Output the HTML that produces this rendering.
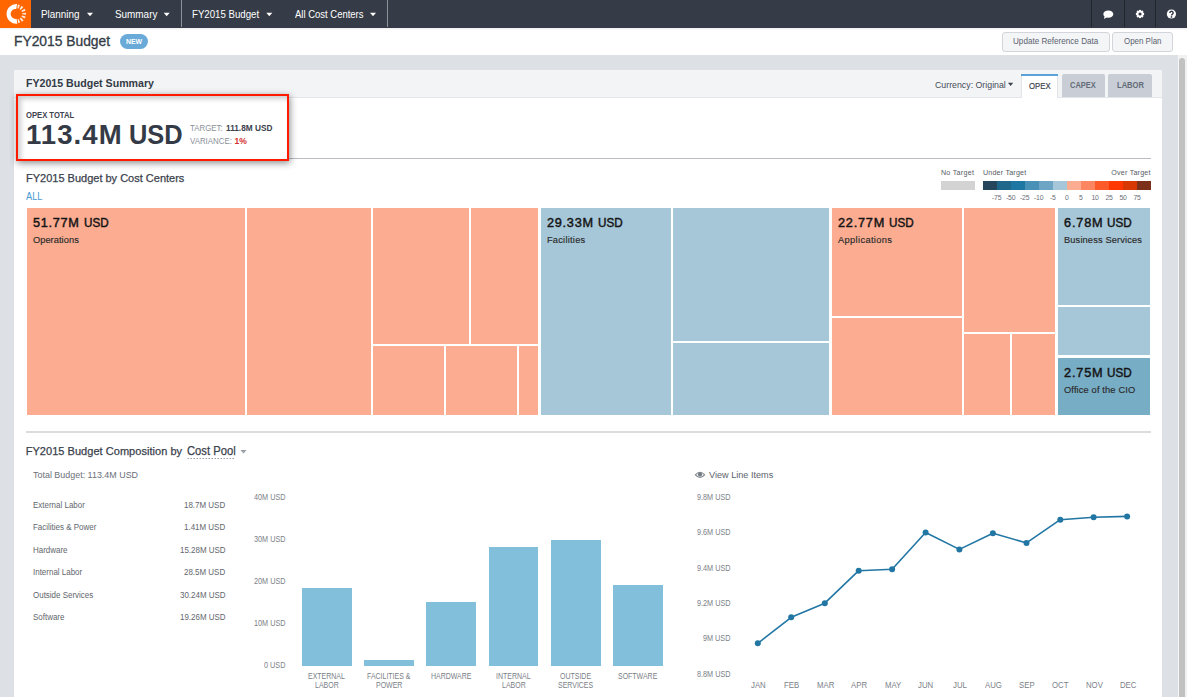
<!DOCTYPE html>
<html><head><meta charset="utf-8"><title>FY2015 Budget</title>
<style>
html,body{margin:0;padding:0;}
body{width:1187px;height:697px;overflow:hidden;position:relative;background:#dde0e4;font-family:"Liberation Sans",sans-serif;}
.r{position:absolute;}
.t{position:absolute;white-space:nowrap;font-family:"Liberation Sans",sans-serif;}
svg{position:absolute;left:0;top:0;}
</style></head><body>
<div class="r" style="left:0px;top:0px;width:1187px;height:28px;background:#363c47;"></div>
<div class="r" style="left:0px;top:0px;width:31px;height:28px;background:#ff6600;"></div>
<div class="r" style="left:181px;top:0px;width:1px;height:28px;background:#8d9299;"></div>
<div class="r" style="left:387px;top:0px;width:1px;height:28px;background:#8d9299;"></div>
<div class="r" style="left:1091px;top:0px;width:1px;height:28px;background:#1f232a;"></div>
<div class="r" style="left:1124px;top:0px;width:1px;height:28px;background:#1f232a;"></div>
<div class="r" style="left:1155px;top:0px;width:1px;height:28px;background:#1f232a;"></div>
<div class="r" style="left:0px;top:28px;width:1187px;height:27px;background:#ffffff;"></div>
<div class="r" style="left:31px;top:27px;width:1156px;height:1px;background:#363c47;box-shadow:0 1px 2px rgba(0,0,0,0.12);"></div>
<div class="r" style="left:0px;top:27px;width:31px;height:1px;background:#ff6600;box-shadow:0 1px 2px rgba(0,0,0,0.12);"></div>
<div class="r" style="left:120px;top:34px;width:28px;height:15px;background:#6aaad8;border-radius:7.5px;"></div>
<div class="r" style="left:1002px;top:32px;width:108px;height:20px;background:#f4f5f7;border:1px solid #d2d6db;box-sizing:border-box;border-radius:3px;"></div>
<div class="r" style="left:1112px;top:32px;width:61px;height:20px;background:#f4f5f7;border:1px solid #d2d6db;box-sizing:border-box;border-radius:3px;"></div>
<div class="r" style="left:1178px;top:55px;width:9px;height:642px;background:#f1f1f1;"></div>
<div class="r" style="left:1178px;top:55px;width:1px;height:642px;background:#f7f7f7;"></div>
<div class="r" style="left:1179px;top:58px;width:6px;height:652px;background:#c1c1c1;border-radius:3px;"></div>
<div class="r" style="left:14px;top:70px;width:1148px;height:627px;background:#ffffff;"></div>
<div class="r" style="left:14px;top:70px;width:1148px;height:27px;background:#f3f4f6;"></div>
<div class="r" style="left:14px;top:97px;width:1148px;height:1px;background:#e3e5e8;"></div>
<div class="r" style="left:1021px;top:74px;width:37px;height:24px;background:#ffffff;border-left:1px solid #e1e4e8;border-right:1px solid #e1e4e8;box-sizing:border-box;"></div>
<div class="r" style="left:1021px;top:74px;width:37px;height:2px;background:#5aa2d8;"></div>
<div class="r" style="left:1062px;top:74px;width:43px;height:23px;background:#c9ced6;border-radius:2px 2px 0 0;"></div>
<div class="r" style="left:1108px;top:74px;width:44px;height:23px;background:#c9ced6;border-radius:2px 2px 0 0;"></div>
<div class="r" style="left:26px;top:158px;width:1125px;height:1px;background:#b9bdc3;"></div>
<div class="r" style="left:16px;top:94px;width:273px;height:67px;background:#ffffff;border:2px solid #ff1a00;box-sizing:border-box;box-shadow:1px 2px 7px rgba(0,0,0,0.45), inset 3px 3px 5px rgba(0,0,0,0.2);"></div>
<div class="r" style="left:941px;top:181px;width:34px;height:9px;background:#d3d3d3;"></div>
<div class="r" style="left:983px;top:181px;width:14px;height:9px;background:#25465c;"></div>
<div class="r" style="left:997px;top:181px;width:14px;height:9px;background:#1f688c;"></div>
<div class="r" style="left:1011px;top:181px;width:14px;height:9px;background:#1e76a3;"></div>
<div class="r" style="left:1025px;top:181px;width:14px;height:9px;background:#4a91b8;"></div>
<div class="r" style="left:1039px;top:181px;width:14px;height:9px;background:#6ea5c4;"></div>
<div class="r" style="left:1053px;top:181px;width:14px;height:9px;background:#a5c7d9;"></div>
<div class="r" style="left:1067px;top:181px;width:14px;height:9px;background:#fcac91;"></div>
<div class="r" style="left:1081px;top:181px;width:14px;height:9px;background:#fc8662;"></div>
<div class="r" style="left:1095px;top:181px;width:14px;height:9px;background:#fc5a28;"></div>
<div class="r" style="left:1109px;top:181px;width:14px;height:9px;background:#ff3700;"></div>
<div class="r" style="left:1123px;top:181px;width:14px;height:9px;background:#d83904;"></div>
<div class="r" style="left:1137px;top:181px;width:14px;height:9px;background:#7d3019;"></div>
<div class="r" style="left:27px;top:208px;width:218px;height:207px;background:#fbac91;"></div>
<div class="r" style="left:247px;top:208px;width:124px;height:207px;background:#fbac91;"></div>
<div class="r" style="left:373px;top:208px;width:96px;height:136px;background:#fbac91;"></div>
<div class="r" style="left:471px;top:208px;width:67px;height:136px;background:#fbac91;"></div>
<div class="r" style="left:373px;top:346px;width:71px;height:69px;background:#fbac91;"></div>
<div class="r" style="left:446px;top:346px;width:71px;height:69px;background:#fbac91;"></div>
<div class="r" style="left:519px;top:346px;width:19px;height:69px;background:#fbac91;"></div>
<div class="r" style="left:541px;top:208px;width:130px;height:207px;background:#a6c7d8;"></div>
<div class="r" style="left:673px;top:208px;width:156px;height:133px;background:#a6c7d8;"></div>
<div class="r" style="left:673px;top:343px;width:156px;height:72px;background:#a6c7d8;"></div>
<div class="r" style="left:832px;top:208px;width:130px;height:108px;background:#fbac91;"></div>
<div class="r" style="left:832px;top:318px;width:130px;height:97px;background:#fbac91;"></div>
<div class="r" style="left:964px;top:208px;width:91px;height:124px;background:#fbac91;"></div>
<div class="r" style="left:964px;top:334px;width:46px;height:81px;background:#fbac91;"></div>
<div class="r" style="left:1012px;top:334px;width:43px;height:81px;background:#fbac91;"></div>
<div class="r" style="left:1058px;top:208px;width:92px;height:97px;background:#a6c7d8;"></div>
<div class="r" style="left:1058px;top:307px;width:92px;height:48px;background:#a6c7d8;"></div>
<div class="r" style="left:1058px;top:358px;width:92px;height:57px;background:#78adc6;"></div>
<div class="r" style="left:26px;top:431px;width:1125px;height:2px;background:#dcdcdc;"></div>
<div class="r" style="left:302.1px;top:587.83px;width:49.69999999999999px;height:78.16999999999996px;background:#82bfda;"></div>
<div class="r" style="left:364.28px;top:660.11px;width:49.700000000000045px;height:5.889999999999986px;background:#82bfda;"></div>
<div class="r" style="left:426.46px;top:602.13px;width:49.700000000000045px;height:63.870000000000005px;background:#82bfda;"></div>
<div class="r" style="left:488.64px;top:546.87px;width:49.700000000000045px;height:119.13px;background:#82bfda;"></div>
<div class="r" style="left:550.82px;top:539.6px;width:49.69999999999993px;height:126.39999999999998px;background:#82bfda;"></div>
<div class="r" style="left:613.0px;top:585.49px;width:49.700000000000045px;height:80.50999999999999px;background:#82bfda;"></div>
<svg width="1187" height="697" viewBox="0 0 1187 697"><line x1="187.5" y1="458.5" x2="235.5" y2="458.5" stroke="#9aa0a8" stroke-width="1" stroke-dasharray="1.5 1.5"/>
<polygon points="87,12.7 93,12.7 90.0,16.2" fill="#fff"/>
<polygon points="163.7,12.7 169.7,12.7 166.7,16.2" fill="#fff"/>
<polygon points="266.3,12.7 272.3,12.7 269.3,16.2" fill="#fff"/>
<polygon points="370,12.7 376,12.7 373.0,16.2" fill="#fff"/>
<polygon points="1008,82.8 1013.2,82.8 1010.6,86" fill="#3a414c"/>
<polygon points="240.4,450 246.6,450 243.5,453.6" fill="#9aa0a8"/>
<polyline fill="none" stroke="#2176a4" stroke-width="1.6" stroke-linejoin="round" points="757.8,643.3 791.2,617.3 824.8,603.2 858.7,570.7 892.1,569.2 925.6,532.5 959.4,549.4 992.9,533.3 1026.5,542.9 1060.3,519.7 1093.6,517.3 1127.1,516.4"/>
<circle cx="757.8" cy="643.3" r="3" fill="#2176a4"/>
<circle cx="791.2" cy="617.3" r="3" fill="#2176a4"/>
<circle cx="824.8" cy="603.2" r="3" fill="#2176a4"/>
<circle cx="858.7" cy="570.7" r="3" fill="#2176a4"/>
<circle cx="892.1" cy="569.2" r="3" fill="#2176a4"/>
<circle cx="925.6" cy="532.5" r="3" fill="#2176a4"/>
<circle cx="959.4" cy="549.4" r="3" fill="#2176a4"/>
<circle cx="992.9" cy="533.3" r="3" fill="#2176a4"/>
<circle cx="1026.5" cy="542.9" r="3" fill="#2176a4"/>
<circle cx="1060.3" cy="519.7" r="3" fill="#2176a4"/>
<circle cx="1093.6" cy="517.3" r="3" fill="#2176a4"/>
<circle cx="1127.1" cy="516.4" r="3" fill="#2176a4"/>
<ellipse cx="1108.3" cy="14.1" rx="5.0" ry="3.6" fill="#fff"/><polygon points="1104.6,16.2 1106.9,17.2 1103.9,19.1" fill="#fff"/>
<rect x="1138.9" y="9.9" width="2.2" height="2.0" fill="#fff" transform="rotate(0 1140 14)"/><rect x="1138.9" y="9.9" width="2.2" height="2.0" fill="#fff" transform="rotate(45 1140 14)"/><rect x="1138.9" y="9.9" width="2.2" height="2.0" fill="#fff" transform="rotate(90 1140 14)"/><rect x="1138.9" y="9.9" width="2.2" height="2.0" fill="#fff" transform="rotate(135 1140 14)"/><rect x="1138.9" y="9.9" width="2.2" height="2.0" fill="#fff" transform="rotate(180 1140 14)"/><rect x="1138.9" y="9.9" width="2.2" height="2.0" fill="#fff" transform="rotate(225 1140 14)"/><rect x="1138.9" y="9.9" width="2.2" height="2.0" fill="#fff" transform="rotate(270 1140 14)"/><rect x="1138.9" y="9.9" width="2.2" height="2.0" fill="#fff" transform="rotate(315 1140 14)"/><circle cx="1140" cy="14" r="3.1" fill="#fff"/><circle cx="1140" cy="14" r="1.6" fill="#363c47"/>
<circle cx="1171.4" cy="14" r="4.6" fill="#fff"/><path d="M1169.9,12.9 A1.6,1.6 0 1 1 1172.5,14.1 C1171.8,14.5 1171.5,14.8 1171.5,15.6" fill="none" stroke="#363c47" stroke-width="1.5"/><circle cx="1171.5" cy="16.9" r="0.85" fill="#363c47"/>
<path d="M695.4,474.8 Q700,469.6 704.6,474.8 Q700,480 695.4,474.8 Z" fill="none" stroke="#7d838c" stroke-width="1.1"/><circle cx="700" cy="474.4" r="2.1" fill="#737a84"/>
<g><path d="M17,4.05 A9.9,9.9 0 1 0 17.3,23.8 L16.6,18.8 A5,5 0 1 1 16.3,8.95 Z" fill="#fff"/><path d="M17.6,6.4 A7.5,7.5 0 0 1 17.4,21.3" fill="none" stroke="#fff" stroke-width="3.8" stroke-dasharray="1.7 1.5" opacity="0.85"/></g></svg>
<div class="t" style="left:41.27px;top:8.6px;font-size:10.57px;line-height:10.57px;font-weight:400;color:#ffffff;letter-spacing:0px;transform:scaleX(0.935);transform-origin:0 0;">Planning</div>
<div class="t" style="left:114.8px;top:8.6px;font-size:10.57px;line-height:10.57px;font-weight:400;color:#ffffff;letter-spacing:0px;transform:scaleX(0.9378);transform-origin:0 0;">Summary</div>
<div class="t" style="left:191.78px;top:8.7px;font-size:10.57px;line-height:10.57px;font-weight:400;color:#ffffff;letter-spacing:0px;transform:scaleX(0.9151);transform-origin:0 0;">FY2015 Budget</div>
<div class="t" style="left:294.7px;top:8.7px;font-size:10.57px;line-height:10.57px;font-weight:400;color:#ffffff;letter-spacing:0px;transform:scaleX(0.8974);transform-origin:0 0;">All Cost Centers</div>
<div class="t" style="left:13.8px;top:35.2px;font-size:13.86px;line-height:13.86px;font-weight:400;color:#343b46;letter-spacing:0px;transform:scaleX(0.9969);transform-origin:0 0;-webkit-text-stroke:0.3px #343b46;">FY2015 Budget</div>
<div class="t" style="left:125.8px;top:37.9px;font-size:8.0px;line-height:8.0px;font-weight:700;color:#ffffff;letter-spacing:0px;transform:scaleX(0.8632);transform-origin:0 0;">NEW</div>
<div class="t" style="left:1012.9px;top:37.4px;font-size:9.29px;line-height:9.29px;font-weight:400;color:#5a626e;letter-spacing:0px;transform:scaleX(0.8745);transform-origin:0 0;">Update Reference Data</div>
<div class="t" style="left:1123.6px;top:37.4px;font-size:9.29px;line-height:9.29px;font-weight:400;color:#5a626e;letter-spacing:0px;transform:scaleX(0.8545);transform-origin:0 0;">Open Plan</div>
<div class="t" style="left:25.5px;top:78.2px;font-size:10.86px;line-height:10.86px;font-weight:700;color:#343b46;letter-spacing:0px;transform:scaleX(0.9771);transform-origin:0 0;">FY2015 Budget Summary</div>
<div class="t" style="left:934.6px;top:80.5px;font-size:9.29px;line-height:9.29px;font-weight:400;color:#454c57;letter-spacing:0px;transform:scaleX(0.9467);transform-origin:0 0;">Currency: Original</div>
<div class="t" style="left:1028.7px;top:81.9px;font-size:9.14px;line-height:9.14px;font-weight:400;color:#3c434e;letter-spacing:0px;transform:scaleX(0.852);transform-origin:0 0;-webkit-text-stroke:0.2px #3c434e;">OPEX</div>
<div class="t" style="left:1070.3px;top:81.1px;font-size:8.57px;line-height:8.57px;font-weight:700;color:#636b77;letter-spacing:0px;transform:scaleX(0.8733);transform-origin:0 0;">CAPEX</div>
<div class="t" style="left:1116.9px;top:81.1px;font-size:8.57px;line-height:8.57px;font-weight:700;color:#636b77;letter-spacing:0px;transform:scaleX(0.8867);transform-origin:0 0;">LABOR</div>
<div class="t" style="left:25.7px;top:111.2px;font-size:8.29px;line-height:8.29px;font-weight:700;color:#3e444e;letter-spacing:0px;transform:scaleX(0.9231);transform-origin:0 0;">OPEX TOTAL</div>
<div class="t" style="left:25.9px;top:121.4px;font-size:27.57px;line-height:27.57px;font-weight:700;color:#343b46;letter-spacing:1.08px;">113.4M</div>
<div class="t" style="left:129.38px;top:121.4px;font-size:27.57px;line-height:27.57px;font-weight:700;color:#343b46;letter-spacing:0px;transform:scaleX(0.9214);transform-origin:0 0;">USD</div>
<div class="t" style="left:190.4px;top:123.8px;font-size:8.57px;line-height:8.57px;font-weight:400;color:#8a9098;letter-spacing:0px;transform:scaleX(0.92);transform-origin:0 0;">TARGET:</div>
<div class="t" style="left:225.8px;top:123.8px;font-size:8.57px;line-height:8.57px;font-weight:700;color:#3a414c;letter-spacing:0px;transform:scaleX(0.9646);transform-origin:0 0;">111.8M USD</div>
<div class="t" style="left:190.4px;top:136.5px;font-size:8.57px;line-height:8.57px;font-weight:400;color:#8a9098;letter-spacing:0px;transform:scaleX(0.92);transform-origin:0 0;">VARIANCE:</div>
<div class="t" style="left:234.5px;top:136.5px;font-size:8.57px;line-height:8.57px;font-weight:700;color:#d43030;letter-spacing:0px;">1%</div>
<div class="t" style="left:25.8px;top:173.1px;font-size:11.14px;line-height:11.14px;font-weight:400;color:#3a414c;letter-spacing:0px;transform:scaleX(0.9887);transform-origin:0 0;-webkit-text-stroke:0.25px #3a414c;">FY2015 Budget by Cost Centers</div>
<div class="t" style="left:25.5px;top:192.2px;font-size:10.14px;line-height:10.14px;font-weight:400;color:#4a9ad4;letter-spacing:0px;transform:scaleX(0.9111);transform-origin:0 0;">ALL</div>
<div class="t" style="left:940.9px;top:169.8px;font-size:7.14px;line-height:7.14px;font-weight:400;color:#555b63;letter-spacing:0.287px;">No Target</div>
<div class="t" style="left:982.9px;top:169.8px;font-size:7.14px;line-height:7.14px;font-weight:400;color:#555b63;letter-spacing:0.209px;">Under Target</div>
<div class="t" style="left:1111.3px;top:169.8px;font-size:7.14px;line-height:7.14px;font-weight:400;color:#555b63;letter-spacing:0.21px;">Over Target</div>
<div class="t" style="left:992.0px;top:195.1px;font-size:6.86px;line-height:6.86px;font-weight:400;color:#6a7078;letter-spacing:-0.206px;">-75</div>
<div class="t" style="left:1006.0px;top:195.1px;font-size:6.86px;line-height:6.86px;font-weight:400;color:#6a7078;letter-spacing:-0.206px;">-50</div>
<div class="t" style="left:1020.0px;top:195.1px;font-size:6.86px;line-height:6.86px;font-weight:400;color:#6a7078;letter-spacing:-0.206px;">-25</div>
<div class="t" style="left:1034.0px;top:195.1px;font-size:6.86px;line-height:6.86px;font-weight:400;color:#6a7078;letter-spacing:-0.206px;">-10</div>
<div class="t" style="left:1050.0px;top:195.1px;font-size:6.86px;line-height:6.86px;font-weight:400;color:#6a7078;letter-spacing:-0.206px;">-5</div>
<div class="t" style="left:1065.0px;top:195.1px;font-size:6.86px;line-height:6.86px;font-weight:400;color:#6a7078;letter-spacing:-0.206px;">0</div>
<div class="t" style="left:1079.0px;top:195.1px;font-size:6.86px;line-height:6.86px;font-weight:400;color:#6a7078;letter-spacing:-0.206px;">5</div>
<div class="t" style="left:1091.5px;top:195.1px;font-size:6.86px;line-height:6.86px;font-weight:400;color:#6a7078;letter-spacing:-0.206px;">10</div>
<div class="t" style="left:1105.5px;top:195.1px;font-size:6.86px;line-height:6.86px;font-weight:400;color:#6a7078;letter-spacing:-0.206px;">25</div>
<div class="t" style="left:1119.5px;top:195.1px;font-size:6.86px;line-height:6.86px;font-weight:400;color:#6a7078;letter-spacing:-0.206px;">50</div>
<div class="t" style="left:1133.5px;top:195.1px;font-size:6.86px;line-height:6.86px;font-weight:400;color:#6a7078;letter-spacing:-0.206px;">75</div>
<div class="t" style="left:32.9px;top:217.2px;font-size:12.71px;line-height:12.71px;font-weight:400;color:#141414;letter-spacing:0.72px;-webkit-text-stroke:0.45px #141414;">51.77M</div>
<div class="t" style="left:83.7px;top:217.2px;font-size:12.71px;line-height:12.71px;font-weight:400;color:#141414;letter-spacing:0px;transform:scaleX(0.9185);transform-origin:0 0;-webkit-text-stroke:0.45px #141414;">USD</div>
<div class="t" style="left:32.9px;top:235.5px;font-size:9.29px;line-height:9.29px;font-weight:400;color:#2a2a2a;letter-spacing:0.056px;-webkit-text-stroke:0.15px #2a2a2a;">Operations</div>
<div class="t" style="left:546.9px;top:217.2px;font-size:12.71px;line-height:12.71px;font-weight:400;color:#141414;letter-spacing:0.76px;-webkit-text-stroke:0.45px #141414;">29.33M</div>
<div class="t" style="left:598.1px;top:217.2px;font-size:12.71px;line-height:12.71px;font-weight:400;color:#141414;letter-spacing:0px;transform:scaleX(0.9185);transform-origin:0 0;-webkit-text-stroke:0.45px #141414;">USD</div>
<div class="t" style="left:546.9px;top:235.5px;font-size:9.29px;line-height:9.29px;font-weight:400;color:#2a2a2a;letter-spacing:0.244px;-webkit-text-stroke:0.15px #2a2a2a;">Facilities</div>
<div class="t" style="left:838.0px;top:217.2px;font-size:12.71px;line-height:12.71px;font-weight:400;color:#141414;letter-spacing:0.78px;-webkit-text-stroke:0.45px #141414;">22.77M</div>
<div class="t" style="left:889.0px;top:217.2px;font-size:12.71px;line-height:12.71px;font-weight:400;color:#141414;letter-spacing:0px;transform:scaleX(0.9185);transform-origin:0 0;-webkit-text-stroke:0.45px #141414;">USD</div>
<div class="t" style="left:838.0px;top:235.5px;font-size:9.29px;line-height:9.29px;font-weight:400;color:#2a2a2a;letter-spacing:0.355px;-webkit-text-stroke:0.15px #2a2a2a;">Applications</div>
<div class="t" style="left:1064.0px;top:217.2px;font-size:12.71px;line-height:12.71px;font-weight:400;color:#141414;letter-spacing:0.825px;-webkit-text-stroke:0.45px #141414;">6.78M</div>
<div class="t" style="left:1107.4px;top:217.2px;font-size:12.71px;line-height:12.71px;font-weight:400;color:#141414;letter-spacing:0px;transform:scaleX(0.9185);transform-origin:0 0;-webkit-text-stroke:0.45px #141414;">USD</div>
<div class="t" style="left:1064.0px;top:235.5px;font-size:9.29px;line-height:9.29px;font-weight:400;color:#2a2a2a;letter-spacing:0.131px;-webkit-text-stroke:0.15px #2a2a2a;">Business Services</div>
<div class="t" style="left:1064.0px;top:367.2px;font-size:12.71px;line-height:12.71px;font-weight:400;color:#141414;letter-spacing:0.825px;-webkit-text-stroke:0.45px #141414;">2.75M</div>
<div class="t" style="left:1107.4px;top:367.2px;font-size:12.71px;line-height:12.71px;font-weight:400;color:#141414;letter-spacing:0px;transform:scaleX(0.9185);transform-origin:0 0;-webkit-text-stroke:0.45px #141414;">USD</div>
<div class="t" style="left:1064.0px;top:385.5px;font-size:9.29px;line-height:9.29px;font-weight:400;color:#2a2a2a;letter-spacing:0.138px;-webkit-text-stroke:0.15px #2a2a2a;">Office of the CIO</div>
<div class="t" style="left:25.7px;top:446.2px;font-size:11.0px;line-height:11.0px;font-weight:400;color:#3a414c;letter-spacing:0.041px;-webkit-text-stroke:0.25px #3a414c;">FY2015 Budget Composition by</div>
<div class="t" style="left:187.4px;top:445.2px;font-size:12.43px;line-height:12.43px;font-weight:400;color:#3a414c;letter-spacing:0px;transform:scaleX(0.9038);transform-origin:0 0;-webkit-text-stroke:0.25px #3a414c;">Cost Pool</div>
<div class="t" style="left:33.1px;top:470.1px;font-size:9.57px;line-height:9.57px;font-weight:400;color:#6b7079;letter-spacing:0px;transform:scaleX(0.9339);transform-origin:0 0;">Total Budget: 113.4M USD</div>
<div class="t" style="left:709.3px;top:471.0px;font-size:9.29px;line-height:9.29px;font-weight:400;color:#5c636d;letter-spacing:0px;transform:scaleX(0.9831);transform-origin:0 0;">View Line Items</div>
<div class="t" style="left:32.7px;top:500.8px;font-size:8.71px;line-height:8.71px;font-weight:400;color:#62666d;letter-spacing:0.0px;transform:scaleX(0.9158);transform-origin:0 0;">External Labor</div>
<div class="t" style="left:184.09px;top:500.8px;font-size:8.71px;line-height:8.71px;font-weight:400;color:#62666d;letter-spacing:0.0px;transform:scaleX(0.9158);transform-origin:0 0;">18.7M USD</div>
<div class="t" style="left:32.7px;top:523.28px;font-size:8.71px;line-height:8.71px;font-weight:400;color:#62666d;letter-spacing:0.0px;transform:scaleX(0.9158);transform-origin:0 0;">Facilities &amp; Power</div>
<div class="t" style="left:184.09px;top:523.28px;font-size:8.71px;line-height:8.71px;font-weight:400;color:#62666d;letter-spacing:0.0px;transform:scaleX(0.9158);transform-origin:0 0;">1.41M USD</div>
<div class="t" style="left:32.7px;top:545.76px;font-size:8.71px;line-height:8.71px;font-weight:400;color:#62666d;letter-spacing:0.0px;transform:scaleX(0.9158);transform-origin:0 0;">Hardware</div>
<div class="t" style="left:179.51px;top:545.76px;font-size:8.71px;line-height:8.71px;font-weight:400;color:#62666d;letter-spacing:0.0px;transform:scaleX(0.9158);transform-origin:0 0;">15.28M USD</div>
<div class="t" style="left:32.7px;top:568.24px;font-size:8.71px;line-height:8.71px;font-weight:400;color:#62666d;letter-spacing:0.0px;transform:scaleX(0.9158);transform-origin:0 0;">Internal Labor</div>
<div class="t" style="left:184.09px;top:568.24px;font-size:8.71px;line-height:8.71px;font-weight:400;color:#62666d;letter-spacing:0.0px;transform:scaleX(0.9158);transform-origin:0 0;">28.5M USD</div>
<div class="t" style="left:32.7px;top:590.72px;font-size:8.71px;line-height:8.71px;font-weight:400;color:#62666d;letter-spacing:0.0px;transform:scaleX(0.9158);transform-origin:0 0;">Outside Services</div>
<div class="t" style="left:179.51px;top:590.72px;font-size:8.71px;line-height:8.71px;font-weight:400;color:#62666d;letter-spacing:0.0px;transform:scaleX(0.9158);transform-origin:0 0;">30.24M USD</div>
<div class="t" style="left:32.7px;top:613.2px;font-size:8.71px;line-height:8.71px;font-weight:400;color:#62666d;letter-spacing:0.0px;transform:scaleX(0.9158);transform-origin:0 0;">Software</div>
<div class="t" style="left:179.51px;top:613.2px;font-size:8.71px;line-height:8.71px;font-weight:400;color:#62666d;letter-spacing:0.0px;transform:scaleX(0.9158);transform-origin:0 0;">19.26M USD</div>
<div class="t" style="left:253.9px;top:492.8px;font-size:8.43px;line-height:8.43px;font-weight:400;color:#7c8188;letter-spacing:0.0px;transform:scaleX(0.8622);transform-origin:0 0;">40M USD</div>
<div class="t" style="left:253.9px;top:534.9px;font-size:8.43px;line-height:8.43px;font-weight:400;color:#7c8188;letter-spacing:0.0px;transform:scaleX(0.8622);transform-origin:0 0;">30M USD</div>
<div class="t" style="left:253.9px;top:577.0px;font-size:8.43px;line-height:8.43px;font-weight:400;color:#7c8188;letter-spacing:0.0px;transform:scaleX(0.8622);transform-origin:0 0;">20M USD</div>
<div class="t" style="left:253.9px;top:619.1px;font-size:8.43px;line-height:8.43px;font-weight:400;color:#7c8188;letter-spacing:0.0px;transform:scaleX(0.8622);transform-origin:0 0;">10M USD</div>
<div class="t" style="left:264.25px;top:661.2px;font-size:8.43px;line-height:8.43px;font-weight:400;color:#7c8188;letter-spacing:0.0px;transform:scaleX(0.8622);transform-origin:0 0;">0 USD</div>
<div class="t" style="left:697.17px;top:492.8px;font-size:8.43px;line-height:8.43px;font-weight:400;color:#7c8188;letter-spacing:0.0px;transform:scaleX(0.8622);transform-origin:0 0;">9.8M USD</div>
<div class="t" style="left:697.17px;top:528.2px;font-size:8.43px;line-height:8.43px;font-weight:400;color:#7c8188;letter-spacing:0.0px;transform:scaleX(0.8622);transform-origin:0 0;">9.6M USD</div>
<div class="t" style="left:697.17px;top:563.6px;font-size:8.43px;line-height:8.43px;font-weight:400;color:#7c8188;letter-spacing:0.0px;transform:scaleX(0.8622);transform-origin:0 0;">9.4M USD</div>
<div class="t" style="left:697.17px;top:599.0px;font-size:8.43px;line-height:8.43px;font-weight:400;color:#7c8188;letter-spacing:0.0px;transform:scaleX(0.8622);transform-origin:0 0;">9.2M USD</div>
<div class="t" style="left:703.21px;top:634.4px;font-size:8.43px;line-height:8.43px;font-weight:400;color:#7c8188;letter-spacing:0.0px;transform:scaleX(0.8622);transform-origin:0 0;">9M USD</div>
<div class="t" style="left:697.17px;top:669.8px;font-size:8.43px;line-height:8.43px;font-weight:400;color:#7c8188;letter-spacing:0.0px;transform:scaleX(0.8622);transform-origin:0 0;">8.8M USD</div>
<div class="t" style="left:308.4px;top:671.8px;font-size:8.29px;line-height:8.29px;font-weight:400;color:#7c8188;letter-spacing:0.0px;transform:scaleX(0.8432);transform-origin:0 0;">EXTERNAL</div>
<div class="t" style="left:315.15px;top:680.6px;font-size:8.29px;line-height:8.29px;font-weight:400;color:#7c8188;letter-spacing:0.0px;transform:scaleX(0.8432);transform-origin:0 0;">LABOR</div>
<div class="t" style="left:367.21px;top:671.8px;font-size:8.29px;line-height:8.29px;font-weight:400;color:#7c8188;letter-spacing:0.0px;transform:scaleX(0.8432);transform-origin:0 0;">FACILITIES &amp;</div>
<div class="t" style="left:376.06px;top:680.6px;font-size:8.29px;line-height:8.29px;font-weight:400;color:#7c8188;letter-spacing:0.0px;transform:scaleX(0.8432);transform-origin:0 0;">POWER</div>
<div class="t" style="left:431.07px;top:671.8px;font-size:8.29px;line-height:8.29px;font-weight:400;color:#7c8188;letter-spacing:0.0px;transform:scaleX(0.8432);transform-origin:0 0;">HARDWARE</div>
<div class="t" style="left:496.2px;top:671.8px;font-size:8.29px;line-height:8.29px;font-weight:400;color:#7c8188;letter-spacing:0.0px;transform:scaleX(0.8432);transform-origin:0 0;">INTERNAL</div>
<div class="t" style="left:501.69px;top:680.6px;font-size:8.29px;line-height:8.29px;font-weight:400;color:#7c8188;letter-spacing:0.0px;transform:scaleX(0.8432);transform-origin:0 0;">LABOR</div>
<div class="t" style="left:560.07px;top:671.8px;font-size:8.29px;line-height:8.29px;font-weight:400;color:#7c8188;letter-spacing:0.0px;transform:scaleX(0.8432);transform-origin:0 0;">OUTSIDE</div>
<div class="t" style="left:557.96px;top:680.6px;font-size:8.29px;line-height:8.29px;font-weight:400;color:#7c8188;letter-spacing:0.0px;transform:scaleX(0.8432);transform-origin:0 0;">SERVICES</div>
<div class="t" style="left:618.46px;top:671.8px;font-size:8.29px;line-height:8.29px;font-weight:400;color:#7c8188;letter-spacing:0.0px;transform:scaleX(0.8432);transform-origin:0 0;">SOFTWARE</div>
<div class="t" style="left:751.15px;top:680.9px;font-size:8.29px;line-height:8.29px;font-weight:400;color:#7c8188;letter-spacing:0.0px;transform:scaleX(0.94);transform-origin:0 0;">JAN</div>
<div class="t" style="left:784.08px;top:680.9px;font-size:8.29px;line-height:8.29px;font-weight:400;color:#7c8188;letter-spacing:0.0px;transform:scaleX(0.94);transform-origin:0 0;">FEB</div>
<div class="t" style="left:816.74px;top:680.9px;font-size:8.29px;line-height:8.29px;font-weight:400;color:#7c8188;letter-spacing:0.0px;transform:scaleX(0.94);transform-origin:0 0;">MAR</div>
<div class="t" style="left:851.11px;top:680.9px;font-size:8.29px;line-height:8.29px;font-weight:400;color:#7c8188;letter-spacing:0.0px;transform:scaleX(0.94);transform-origin:0 0;">APR</div>
<div class="t" style="left:884.51px;top:680.9px;font-size:8.29px;line-height:8.29px;font-weight:400;color:#7c8188;letter-spacing:0.0px;transform:scaleX(0.94);transform-origin:0 0;">MAY</div>
<div class="t" style="left:918.48px;top:680.9px;font-size:8.29px;line-height:8.29px;font-weight:400;color:#7c8188;letter-spacing:0.0px;transform:scaleX(0.94);transform-origin:0 0;">JUN</div>
<div class="t" style="left:952.75px;top:680.9px;font-size:8.29px;line-height:8.29px;font-weight:400;color:#7c8188;letter-spacing:0.0px;transform:scaleX(0.94);transform-origin:0 0;">JUL</div>
<div class="t" style="left:984.84px;top:680.9px;font-size:8.29px;line-height:8.29px;font-weight:400;color:#7c8188;letter-spacing:0.0px;transform:scaleX(0.94);transform-origin:0 0;">AUG</div>
<div class="t" style="left:1019.38px;top:680.9px;font-size:8.29px;line-height:8.29px;font-weight:400;color:#7c8188;letter-spacing:0.0px;transform:scaleX(0.94);transform-origin:0 0;">SEP</div>
<div class="t" style="left:1052.24px;top:680.9px;font-size:8.29px;line-height:8.29px;font-weight:400;color:#7c8188;letter-spacing:0.0px;transform:scaleX(0.94);transform-origin:0 0;">OCT</div>
<div class="t" style="left:1085.54px;top:680.9px;font-size:8.29px;line-height:8.29px;font-weight:400;color:#7c8188;letter-spacing:0.0px;transform:scaleX(0.94);transform-origin:0 0;">NOV</div>
<div class="t" style="left:1119.51px;top:680.9px;font-size:8.29px;line-height:8.29px;font-weight:400;color:#7c8188;letter-spacing:0.0px;transform:scaleX(0.94);transform-origin:0 0;">DEC</div>
</body></html>
